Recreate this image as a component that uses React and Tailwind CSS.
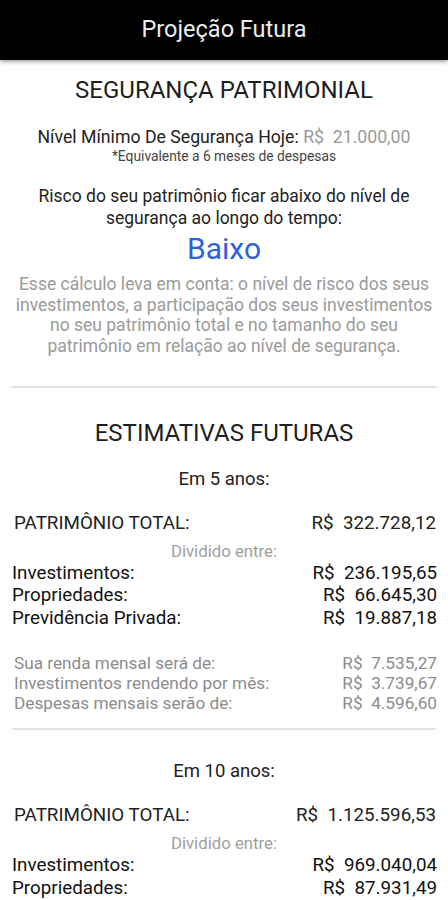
const years = [
  {
    label: "Em 5 anos:",
    total: "322.728,12",
    parts: [
      ["Investimentos:", "236.195,65"],
      ["Propriedades:", "66.645,30"],
      ["Previdência Privada:", "19.887,18"]
    ],
    monthly: [
      ["Sua renda mensal será de:", "7.535,27"],
      ["Investimentos rendendo por mês:", "3.739,67"],
      ["Despesas mensais serão de:", "4.596,60"]
    ]
  },
  {
    label: "Em 10 anos:",
    total: "1.125.596,53",
    parts: [
      ["Investimentos:", "969.040,04"],
      ["Propriedades:", "87.931,49"]
    ],
    monthly: []
  }
];

function YearBlock({ data }) {
  return (
    <div className="pt-[16px]">
      <p className="text-center text-[18.5px] leading-[30px] text-[#222]">{data.label}</p>

      <div className="mt-[14px] flex justify-between pl-[14px] pr-[12px] text-[18.8px] leading-[30px] text-[#222]">
        <span>PATRIMÔNIO TOTAL:</span>
        <span className="whitespace-pre">R$  {data.total}</span>
      </div>
      <p className="mt-[3px] text-center text-[16.8px] leading-[20px] text-[#a0a0a0]">Dividido entre:</p>

      <div className="mt-[1px] pl-[12px] pr-[11px] text-[18.8px] leading-[22.5px] text-[#111]">
        {data.parts.map(([name, value]) => (
          <div key={name} className="flex justify-between">
            <span>{name}</span>
            <span className="whitespace-pre">R$  {value}</span>
          </div>
        ))}
      </div>

      {data.monthly.length > 0 && (
        <div className="mt-[24px] pl-[14px] pr-[11px] text-[17.2px] leading-[20px] text-[#8c8c8c]">
          {data.monthly.map(([name, value]) => (
            <div key={name} className="flex justify-between">
              <span>{name}</span>
              <span className="whitespace-pre">R$  {value}</span>
            </div>
          ))}
        </div>
      )}

      {data.monthly.length > 0 && <div className="mx-[12px] mb-[10px] mt-[15px] h-[2px] bg-[#e2e2e2]" />}
    </div>
  );
}

export default function App() {
  return (
    <div className="h-[900px] overflow-hidden bg-white font-['Roboto',sans-serif]">
      <header className="relative z-10 flex h-[60px] items-center justify-center bg-black shadow-[0_2px_4px_rgba(0,0,0,0.35)]">
        <h1 className="text-[23.5px] text-[#ececec]">Projeção Futura</h1>
      </header>

      <section className="px-[6px] text-center">
        <h2 className="pt-[15px] text-[24px] leading-[30px] text-[#1e1e1e]">SEGURANÇA PATRIMONIAL</h2>

        <p className="mt-[22px] text-[17.7px] leading-[20px] text-[#222]">
          Nível Mínimo De Segurança Hoje:<span className="whitespace-pre text-[#9a9a9a]"> R$  21.000,00</span>
        </p>
        <p className="mt-[1px] text-[13.8px] leading-[16px] text-[#444]">*Equivalente a 6 meses de despesas</p>

        <p className="mt-[21px] text-[17.5px] leading-[22px] text-[#222]">
          Risco do seu patrimônio ficar abaixo do nível de
          <br />
          segurança ao longo do tempo:
        </p>
        <p className="mt-[2px] text-[30px] leading-[36px] text-[#2f5fe3]">Baixo</p>
        <p className="mt-[7px] whitespace-nowrap text-[17.5px] leading-[20.7px] text-[#9a9a9a]">
          Esse cálculo leva em conta: o nível de risco dos seus
          <br />
          investimentos, a participação dos seus investimentos
          <br />
          no seu patrimônio total e no tamanho do seu
          <br />
          patrimônio em relação ao nível de segurança.
        </p>
      </section>

      <div className="mx-[11px] mt-[29px] h-[2px] bg-[#e2e2e2]" />

      <h2 className="pt-[30px] text-center text-[24px] leading-[30px] text-[#1e1e1e]">ESTIMATIVAS FUTURAS</h2>

      {years.map((y) => (
        <YearBlock key={y.label} data={y} />
      ))}
    </div>
  );
}
